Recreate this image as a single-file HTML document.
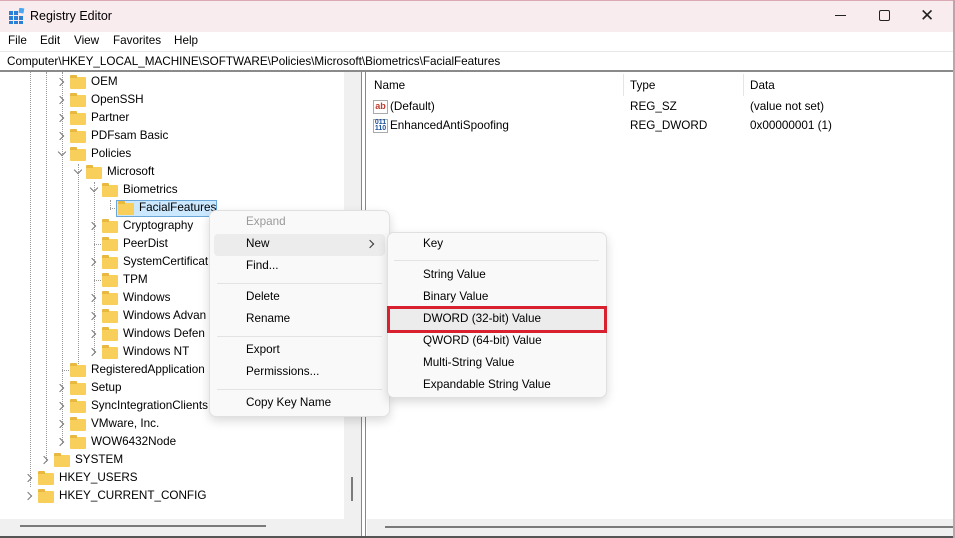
<!DOCTYPE html>
<html><head><meta charset="utf-8"><style>
*{margin:0;padding:0;box-sizing:border-box}
body{width:955px;height:538px;overflow:hidden;background:#fff;font-family:"Liberation Sans",sans-serif;font-size:11.7px;color:#000;position:relative}
.a{position:absolute;white-space:nowrap}
.t{position:absolute;white-space:nowrap;line-height:14px}
.f{position:absolute;width:16px;height:12px;background:#f7cf5a;border-radius:1px}
.f:before{content:"";position:absolute;left:0;top:-2px;width:7px;height:3px;background:#e9b83e;border-radius:1px 1px 0 0}
.c{position:absolute;width:6px;height:6px;border-right:1.3px solid #777;border-bottom:1.3px solid #777}
.r{transform:rotate(-45deg)}
.d{transform:rotate(45deg)}
.dl{position:absolute;border-left:1px dotted #999;width:0}
.dh{position:absolute;border-top:1px dotted #999;height:0}
.sep{position:absolute;height:1px;background:#e3e3e3}
</style></head><body>
<div class="a" style="left:0;top:0;width:955px;height:32px;background:#f8ecee;border-top:1px solid #d9a9b4"></div>
<svg class="a" style="left:9px;top:8px" width="16" height="16" viewBox="0 0 16 16"><g fill="#2b7fd6"><rect x="0" y="3" width="4" height="4"/><rect x="5" y="3" width="4" height="4"/><rect x="0" y="8" width="4" height="4"/><rect x="5" y="8" width="4" height="4"/><rect x="10" y="8" width="4" height="4"/><rect x="0" y="13" width="4" height="3"/><rect x="5" y="13" width="4" height="3"/><rect x="10" y="13" width="4" height="3"/></g><rect x="10" y="0" width="5" height="5" fill="#48a7ef" transform="rotate(10 12 2)"/></svg>
<div class="t" style="left:30px;top:9px;font-size:12.5px">Registry Editor</div>
<div class="a" style="left:835px;top:15px;width:11px;height:1px;background:#222"></div>
<div class="a" style="left:879px;top:10px;width:11px;height:11px;border:1px solid #222;border-radius:2px"></div>
<div class="a" style="left:920px;top:7px;font-size:17px;line-height:17px;color:#222">✕</div>
<div class="a" style="left:0;top:32px;width:955px;height:19px;background:#fff"></div>
<div class="t" style="left:8px;top:34px">File</div>
<div class="t" style="left:40px;top:34px">Edit</div>
<div class="t" style="left:74px;top:34px">View</div>
<div class="t" style="left:113px;top:34px">Favorites</div>
<div class="t" style="left:174px;top:34px">Help</div>
<div class="a" style="left:0;top:51px;width:955px;height:1px;background:#e8e8e8"></div>
<div class="t" style="left:7px;top:55px">Computer\HKEY_LOCAL_MACHINE\SOFTWARE\Policies\Microsoft\Biometrics\FacialFeatures</div>
<div class="a" style="left:0;top:70px;width:955px;height:2px;background:#8a8a8a"></div>
<div class="a" style="left:344px;top:72px;width:17px;height:448px;background:#f0f0f0"></div>
<div class="a" style="left:351px;top:477px;width:2px;height:24px;background:#7a7a7a"></div>
<div class="a" style="left:0;top:519px;width:361px;height:18px;background:#f0f0f0"></div>
<div class="a" style="left:20px;top:525px;width:246px;height:2px;background:#7a7a7a"></div>
<div class="a" style="left:361px;top:72px;width:1px;height:466px;background:#888"></div>
<div class="a" style="left:365px;top:72px;width:1px;height:466px;background:#888"></div>
<div class="a" style="left:367px;top:519px;width:588px;height:18px;background:#f0f0f0"></div>
<div class="a" style="left:385px;top:526px;width:570px;height:2px;background:#7a7a7a"></div>
<div class="a" style="left:0;top:536px;width:955px;height:2px;background:#555"></div>
<div class="a" style="left:953px;top:0;width:2px;height:538px;background:#c9a0aa"></div>
<div class="dl" style="left:30px;top:72px;height:415px"></div>
<div class="dl" style="left:46px;top:72px;height:390px"></div>
<div class="dl" style="left:62px;top:72px;height:372px"></div>
<div class="dl" style="left:78px;top:164px;height:206px"></div>
<div class="dl" style="left:94px;top:182px;height:172px"></div>
<div class="dl" style="left:110px;top:200px;height:10px"></div>
<div class="dh" style="left:110px;top:208px;width:7px"></div>
<div class="dh" style="left:94px;top:244px;width:7px"></div>
<div class="dh" style="left:94px;top:280px;width:7px"></div>
<div class="dh" style="left:62px;top:370px;width:7px"></div>
<div class="c r" style="left:57px;top:79px"></div><div class="f" style="left:70px;top:77px"></div><div class="t" style="left:91px;top:75px">OEM</div>
<div class="c r" style="left:57px;top:97px"></div><div class="f" style="left:70px;top:95px"></div><div class="t" style="left:91px;top:93px">OpenSSH</div>
<div class="c r" style="left:57px;top:115px"></div><div class="f" style="left:70px;top:113px"></div><div class="t" style="left:91px;top:111px">Partner</div>
<div class="c r" style="left:57px;top:133px"></div><div class="f" style="left:70px;top:131px"></div><div class="t" style="left:91px;top:129px">PDFsam Basic</div>
<div class="c d" style="left:59px;top:149px"></div><div class="f" style="left:70px;top:149px"></div><div class="t" style="left:91px;top:147px">Policies</div>
<div class="c d" style="left:75px;top:167px"></div><div class="f" style="left:86px;top:167px"></div><div class="t" style="left:107px;top:165px">Microsoft</div>
<div class="c d" style="left:91px;top:185px"></div><div class="f" style="left:102px;top:185px"></div><div class="t" style="left:123px;top:183px">Biometrics</div>
<div class="a" style="left:116px;top:200px;width:101px;height:17px;background:#cce8ff;border:1px solid #6aa7d8"></div>
<div class="f" style="left:118px;top:203px"></div><div class="t" style="left:139px;top:201px">FacialFeatures</div>
<div class="c r" style="left:89px;top:223px"></div><div class="f" style="left:102px;top:221px"></div><div class="t" style="left:123px;top:219px">Cryptography</div>
<div class="f" style="left:102px;top:239px"></div><div class="t" style="left:123px;top:237px">PeerDist</div>
<div class="c r" style="left:89px;top:259px"></div><div class="f" style="left:102px;top:257px"></div><div class="t" style="left:123px;top:255px">SystemCertificat</div>
<div class="f" style="left:102px;top:275px"></div><div class="t" style="left:123px;top:273px">TPM</div>
<div class="c r" style="left:89px;top:295px"></div><div class="f" style="left:102px;top:293px"></div><div class="t" style="left:123px;top:291px">Windows</div>
<div class="c r" style="left:89px;top:313px"></div><div class="f" style="left:102px;top:311px"></div><div class="t" style="left:123px;top:309px">Windows Advan</div>
<div class="c r" style="left:89px;top:331px"></div><div class="f" style="left:102px;top:329px"></div><div class="t" style="left:123px;top:327px">Windows Defen</div>
<div class="c r" style="left:89px;top:349px"></div><div class="f" style="left:102px;top:347px"></div><div class="t" style="left:123px;top:345px">Windows NT</div>
<div class="f" style="left:70px;top:365px"></div><div class="t" style="left:91px;top:363px">RegisteredApplication</div>
<div class="c r" style="left:57px;top:385px"></div><div class="f" style="left:70px;top:383px"></div><div class="t" style="left:91px;top:381px">Setup</div>
<div class="c r" style="left:57px;top:403px"></div><div class="f" style="left:70px;top:401px"></div><div class="t" style="left:91px;top:399px">SyncIntegrationClients</div>
<div class="c r" style="left:57px;top:421px"></div><div class="f" style="left:70px;top:419px"></div><div class="t" style="left:91px;top:417px">VMware, Inc.</div>
<div class="c r" style="left:57px;top:439px"></div><div class="f" style="left:70px;top:437px"></div><div class="t" style="left:91px;top:435px">WOW6432Node</div>
<div class="c r" style="left:41px;top:457px"></div><div class="f" style="left:54px;top:455px"></div><div class="t" style="left:75px;top:453px">SYSTEM</div>
<div class="c r" style="left:25px;top:475px"></div><div class="f" style="left:38px;top:473px"></div><div class="t" style="left:59px;top:471px">HKEY_USERS</div>
<div class="c r" style="left:25px;top:493px"></div><div class="f" style="left:38px;top:491px"></div><div class="t" style="left:59px;top:489px">HKEY_CURRENT_CONFIG</div>
<div class="t" style="left:374px;top:79px">Name</div>
<div class="t" style="left:630px;top:79px">Type</div>
<div class="t" style="left:750px;top:79px">Data</div>
<div class="a" style="left:623px;top:74px;width:1px;height:22px;background:#e5e5e5"></div>
<div class="a" style="left:743px;top:74px;width:1px;height:22px;background:#e5e5e5"></div>
<div class="a" style="left:373px;top:100px;width:15px;height:14px;border:1px solid #aaa;background:#fff;font-size:9px;color:#c0392b;font-weight:bold;line-height:10px;text-align:center">ab</div>
<div class="t" style="left:390px;top:100px">(Default)</div>
<div class="t" style="left:630px;top:100px">REG_SZ</div>
<div class="t" style="left:750px;top:100px">(value not set)</div>
<div class="a" style="left:373px;top:119px;width:15px;height:14px;border:1px solid #aaa;background:#fff;font-size:7px;color:#1a4f9c;font-weight:bold;line-height:6px;text-align:center">011<br>110</div>
<div class="t" style="left:390px;top:119px">EnhancedAntiSpoofing</div>
<div class="t" style="left:630px;top:119px">REG_DWORD</div>
<div class="t" style="left:750px;top:119px">0x00000001 (1)</div>
<div class="a" style="left:209px;top:210px;width:181px;height:207px;background:#f9f9f9;border:1px solid #e0e0e0;border-radius:7px;box-shadow:0 4px 10px rgba(0,0,0,.15)"></div>
<div class="a" style="left:214px;top:234px;width:171px;height:22px;background:#ececec;border-radius:4px"></div>
<div class="t" style="left:246px;top:215px;color:#9a9a9a">Expand</div>
<div class="t" style="left:246px;top:237px">New</div>
<div class="c r" style="left:367px;top:241px;border-color:#333"></div>
<div class="t" style="left:246px;top:259px">Find...</div>
<div class="sep" style="left:217px;top:283px;width:165px"></div>
<div class="t" style="left:246px;top:290px">Delete</div>
<div class="t" style="left:246px;top:312px">Rename</div>
<div class="sep" style="left:217px;top:336px;width:165px"></div>
<div class="t" style="left:246px;top:343px">Export</div>
<div class="t" style="left:246px;top:365px">Permissions...</div>
<div class="sep" style="left:217px;top:389px;width:165px"></div>
<div class="t" style="left:246px;top:396px">Copy Key Name</div>
<div class="a" style="left:387px;top:232px;width:220px;height:166px;background:#f9f9f9;border:1px solid #e0e0e0;border-radius:7px;box-shadow:0 4px 10px rgba(0,0,0,.15)"></div>
<div class="t" style="left:423px;top:237px">Key</div>
<div class="sep" style="left:394px;top:260px;width:205px"></div>
<div class="t" style="left:423px;top:268px">String Value</div>
<div class="t" style="left:423px;top:290px">Binary Value</div>
<div class="a" style="left:387px;top:306px;width:220px;height:27px;background:#ececec;border:3px solid #d9202f"></div>
<div class="t" style="left:423px;top:312px">DWORD (32-bit) Value</div>
<div class="t" style="left:423px;top:334px">QWORD (64-bit) Value</div>
<div class="t" style="left:423px;top:356px">Multi-String Value</div>
<div class="t" style="left:423px;top:378px">Expandable String Value</div>
</body></html>
